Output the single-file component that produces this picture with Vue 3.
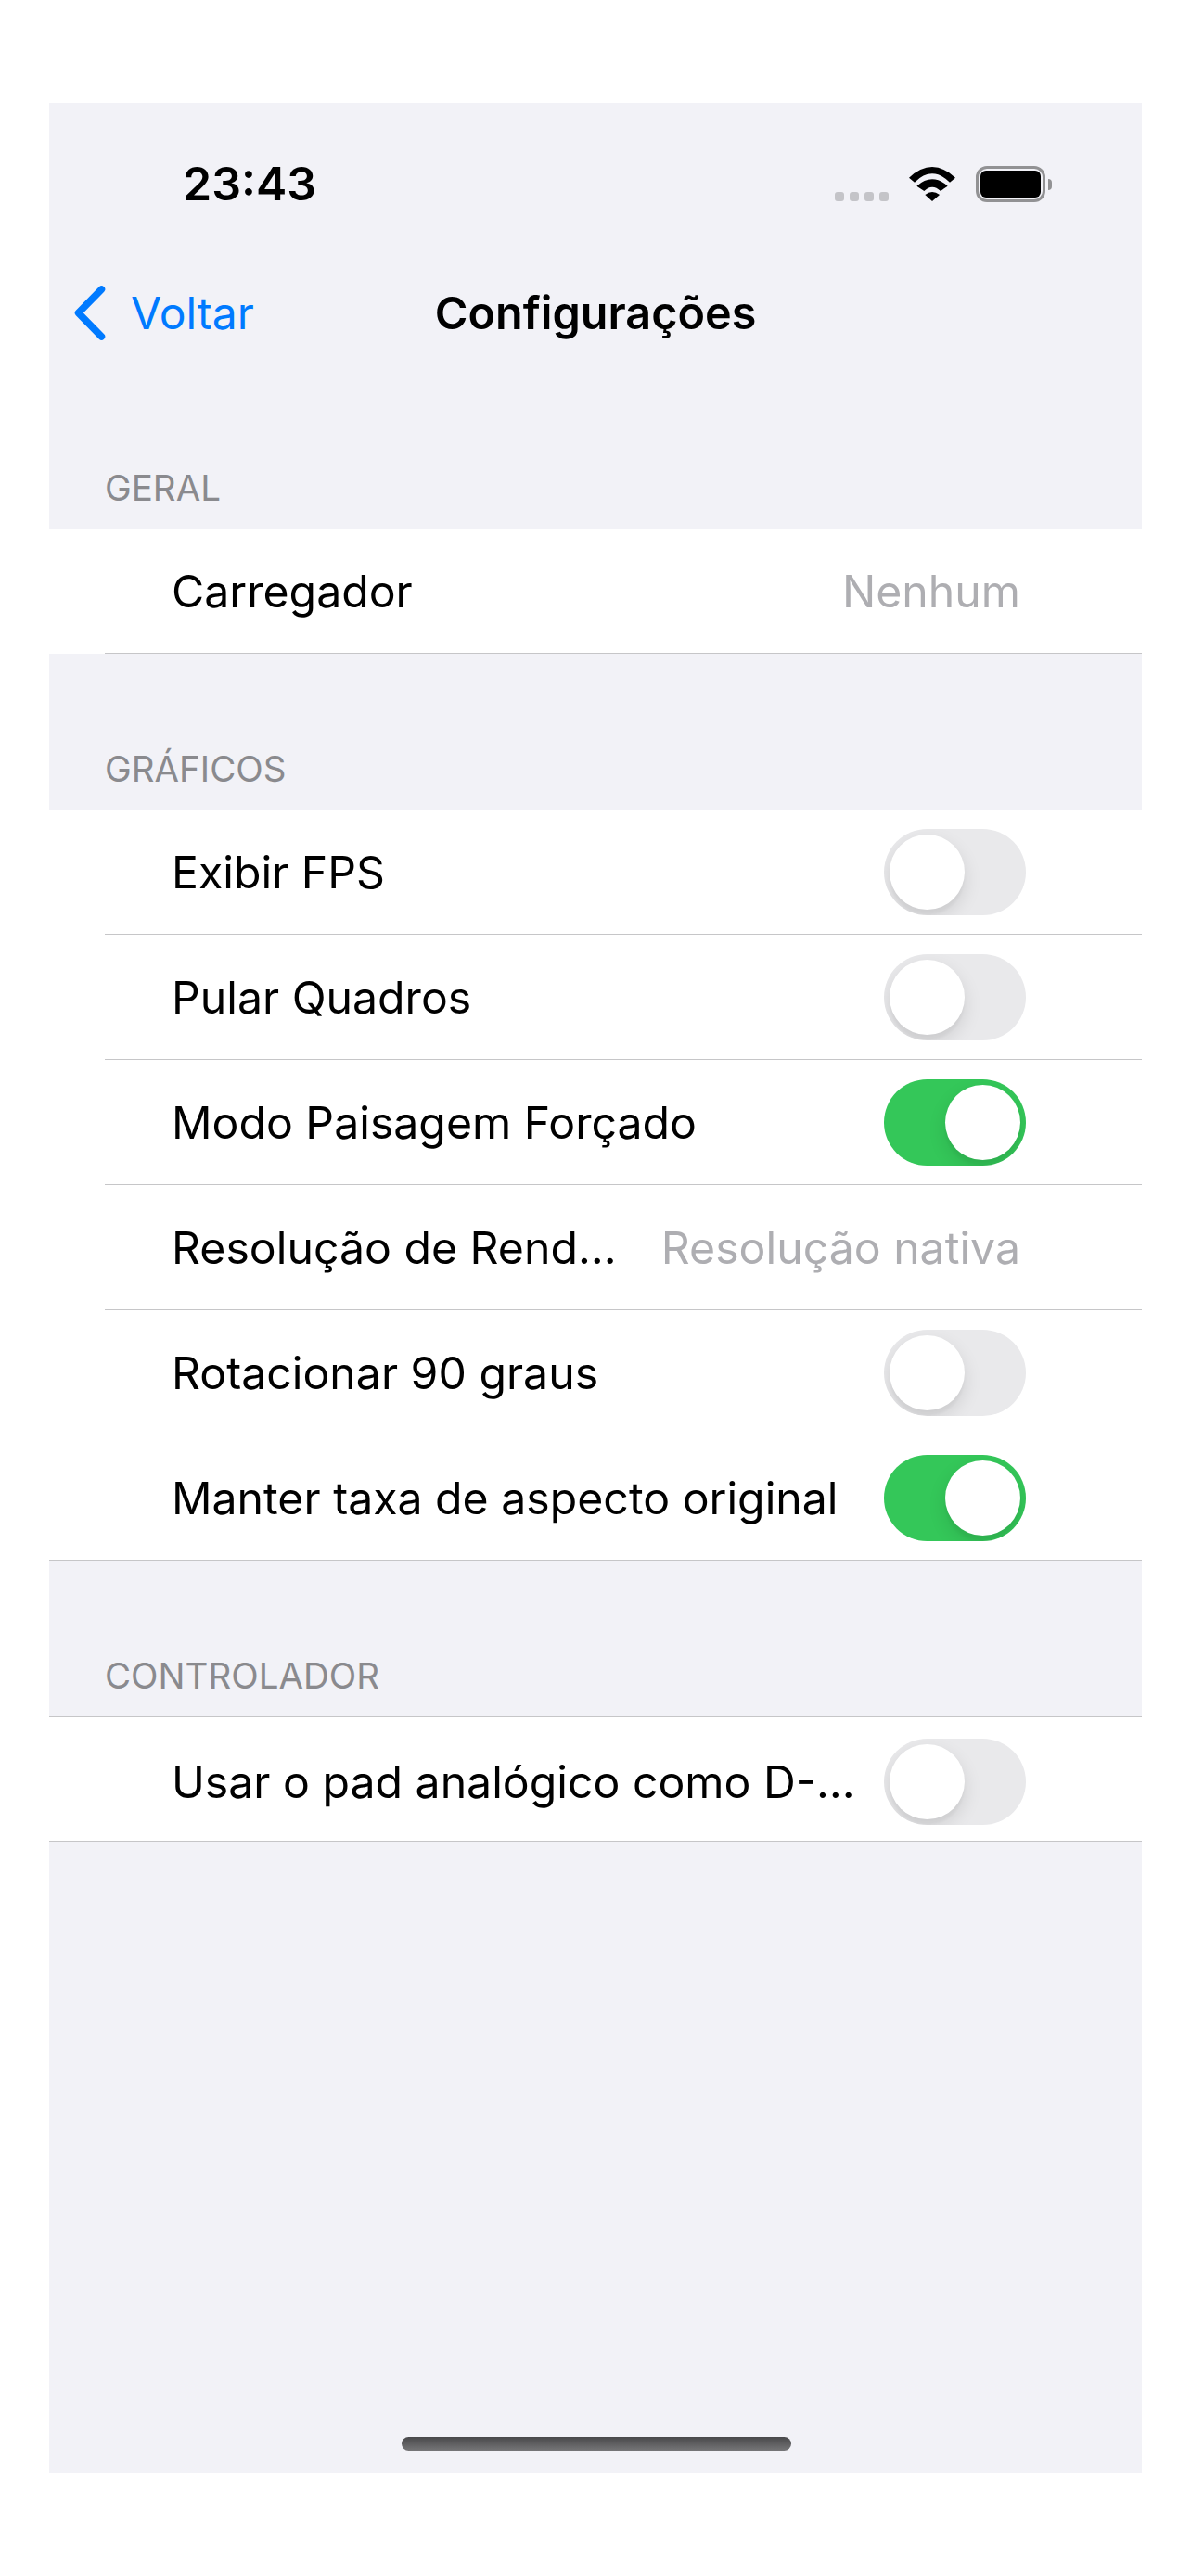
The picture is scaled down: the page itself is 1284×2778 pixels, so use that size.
<script setup>
const sections = [
  { title: 'GERAL', inset: true, rows: [{ label: 'Carregador', value: 'Nenhum' }] },
  { title: 'GRÁFICOS', rows: [
    { label: 'Exibir FPS', on: false },
    { label: 'Pular Quadros', on: false },
    { label: 'Modo Paisagem Forçado', on: true },
    { label: 'Resolução de Rend…', value: 'Resolução nativa' },
    { label: 'Rotacionar 90 graus', on: false },
    { label: 'Manter taxa de aspecto original', on: true },
  ] },
  { title: 'CONTROLADOR', low: true, rows: [{ label: 'Usar o pad analógico como D-…', on: false }] },
]
</script>

<template>
  <div class="page">
    <div class="screen">
      <header class="status">
        <span class="time">23:43</span>
        <div class="status-icons">
          <div class="dots"><i></i><i></i><i></i><i></i></div>
          <svg class="wifi" viewBox="0 0 150 111" width="50" height="37">
            <path d="M0 35Q75 -35 150 35L132 50Q75 -6 18 50Z" />
            <path d="M25 62Q75 18 125 62L102 78Q75 52 49 78Z" />
            <path d="M52 90Q75 72 99 90L75 111Z" />
          </svg>
          <div class="battery"><div class="battery-fill"></div></div>
          <div class="battery-cap"></div>
        </div>
      </header>

      <nav class="nav">
        <div class="back">
          <svg class="chevron" viewBox="0 0 34 59" width="34" height="59">
            <path d="M29.5 4 L4.5 29.5 L29.5 55" />
          </svg>
          <span>Voltar</span>
        </div>
        <h1 class="title">Configurações</h1>
      </nav>

      <section v-for="(section, s) in sections" :key="section.title" class="section">
        <h2 class="section-title" :class="{ first: s === 0 }">{{ section.title }}</h2>
        <div class="group">
          <div
            v-for="(row, r) in section.rows"
            :key="row.label"
            class="row"
            :class="{ full: r === section.rows.length - 1 && !section.inset, low: section.low }"
          >
            <span class="label">{{ row.label }}</span>
            <span v-if="row.value" class="value">{{ row.value }}</span>
            <span v-else class="toggle" :class="{ on: row.on }"><span class="knob"></span></span>
          </div>
        </div>
      </section>

      <div class="home"></div>
    </div>
  </div>
</template>

<style scoped>
.page {
  width: 1284px;
  height: 2778px;
  background: #fff;
  padding: 111px 53px;
  box-sizing: border-box;
  font-family: Inter, "Noto Sans", sans-serif;
  color: #000;
}
.screen {
  width: 1178px;
  height: 2556px;
  background: #f2f2f7;
  display: flex;
  flex-direction: column;
}
.status {
  height: 174px;
  flex: none;
  display: flex;
  align-items: center;
  justify-content: space-between;
  padding: 0 97px 0 144px;
}
.time {
  font-size: 50px;
  font-weight: 600;
  line-height: 60px;
}
.status-icons {
  display: flex;
  align-items: flex-end;
  height: 39px;
}
.dots {
  display: flex;
  gap: 6px;
  margin-bottom: 1px;
}
.dots i {
  display: block;
  width: 10px;
  height: 10px;
  border-radius: 3px;
  background: #c4c4c8;
}
.wifi {
  margin: 0 22px 1px 22px;
  display: block;
}
.wifi path {
  fill: #000;
}
.battery {
  width: 75px;
  height: 39px;
  box-sizing: border-box;
  border: 3px solid #929294;
  border-radius: 12px;
  padding: 2px;
}
.battery-fill {
  width: 100%;
  height: 100%;
  background: #000;
  border-radius: 6px;
}
.battery-cap {
  width: 4px;
  height: 12px;
  margin: 0 0 13px 3px;
  background: #929294;
  border-radius: 0 4px 4px 0;
}
.nav {
  height: 106px;
  flex: none;
  position: relative;
  display: flex;
  align-items: center;
  justify-content: center;
}
.back {
  position: absolute;
  left: 27px;
  top: 23px;
  display: flex;
  align-items: center;
  gap: 27px;
  color: #007aff;
  font-size: 48px;
  line-height: 59px;
}
.chevron path {
  fill: none;
  stroke: #007aff;
  stroke-width: 7.5;
  stroke-linecap: round;
  stroke-linejoin: round;
}
.title {
  margin: 0;
  font-size: 48.5px;
  font-weight: 600;
  line-height: 60px;
}
.section-title {
  margin: 0;
  height: 168px;
  box-sizing: border-box;
  padding: 0 0 22px 60px;
  display: flex;
  align-items: flex-end;
  font-size: 38.5px;
  font-weight: 400;
  line-height: 44px;
  color: #8a8a8e;
}
.section-title.first {
  height: 179px;
}
.group {
  background: #fff;
  border-top: 1px solid #c6c6c8;
}
.row {
  height: 135px;
  box-sizing: border-box;
  margin-left: 60px;
  padding: 0 125px 0 72px;
  display: flex;
  align-items: center;
  justify-content: space-between;
  border-bottom: 1px solid #c6c6c8;
  font-size: 48.2px;
}
.row:first-child {
  height: 134px;
}
.row.full {
  margin-left: 0;
  padding-left: 132px;
}
.row.low {
  padding-top: 6px;
}
.label {
  white-space: nowrap;
}
.value {
  color: #aeaeb2;
  margin-right: 6px;
  white-space: nowrap;
}
.toggle {
  width: 153px;
  height: 93px;
  flex: none;
  border-radius: 47px;
  background: #e9e9eb;
  position: relative;
  overflow: hidden;
}
.toggle.on {
  background: #34c759;
}
.knob {
  position: absolute;
  top: 6px;
  left: 6px;
  width: 81px;
  height: 81px;
  border-radius: 50%;
  background: #fff;
  box-shadow: 0 8px 20px rgba(0, 0, 0, 0.11), 0 6px 3px rgba(0, 0, 0, 0.03);
}
.on .knob {
  left: 66px;
}
.home {
  margin: auto 0 24px 380px;
  width: 420px;
  height: 15px;
  flex: none;
  border-radius: 8px;
  background: linear-gradient(#48484a, #767678);
}
</style>
